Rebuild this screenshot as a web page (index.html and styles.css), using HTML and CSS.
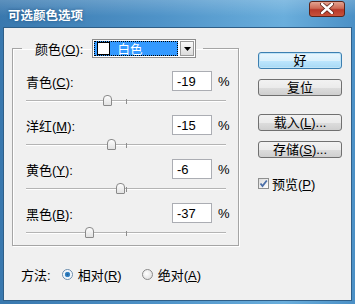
FILE: index.html
```html
<!DOCTYPE html>
<html lang="zh-CN">
<head>
    <meta charset="UTF-8">
    <title>可选颜色选项</title>
    <link rel="stylesheet" href="styles.css">
</head>
<body>
    <div class="window">
        <div class="titlebar">
            <span class="title">可选颜色选项</span>
            <span class="close">
                <svg width="14" height="11" viewBox="0 0 14 11">
                    <path d="M2 1 L12 10 M12 1 L2 10" stroke="#5a1e14" stroke-width="4" stroke-linecap="round"/>
                    <path d="M2 1 L12 10 M12 1 L2 10" stroke="#fff" stroke-width="2.4" stroke-linecap="round"/>
                </svg>
            </span>
        </div>
        <div class="client">
            <div class="main">
                <fieldset class="group">
                    <legend>
                        <span class="label">颜色(<u>O</u>):</span>
                        <span class="select">
                            <span class="choice">
                                <span class="swatch"></span>
                                <span class="choice-text">白色</span>
                            </span>
                            <span class="arrow">
                                <svg width="7" height="4" viewBox="0 0 7 4"><path d="M0 0 H7 L3.5 4 Z" fill="#000"/></svg>
                            </span>
                        </span>
                    </legend>

                    <div class="row">
                        <div class="field">
                            <span class="label">青色(<u>C</u>):</span>
                            <span class="input">-19</span>
                            <span class="pct">%</span>
                        </div>
                        <div class="slider"><span class="track"></span><span class="tick"></span><span class="thumb" style="left: 77px"></span></div>
                    </div>
                    <div class="row">
                        <div class="field">
                            <span class="label">洋红(<u>M</u>):</span>
                            <span class="input">-15</span>
                            <span class="pct">%</span>
                        </div>
                        <div class="slider"><span class="track"></span><span class="tick"></span><span class="thumb" style="left: 81px"></span></div>
                    </div>
                    <div class="row">
                        <div class="field">
                            <span class="label">黄色(<u>Y</u>):</span>
                            <span class="input">-6</span>
                            <span class="pct">%</span>
                        </div>
                        <div class="slider"><span class="track"></span><span class="tick"></span><span class="thumb" style="left: 90px"></span></div>
                    </div>
                    <div class="row">
                        <div class="field">
                            <span class="label">黑色(<u>B</u>):</span>
                            <span class="input">-37</span>
                            <span class="pct">%</span>
                        </div>
                        <div class="slider"><span class="track"></span><span class="tick"></span><span class="thumb" style="left: 59px"></span></div>
                    </div>
                </fieldset>

                <div class="method">
                    <span class="label">方法:</span>
                    <span class="radio checked"></span>
                    <span class="opt">相对(<u>R</u>)</span>
                    <span class="radio"></span>
                    <span class="opt">绝对(<u>A</u>)</span>
                </div>
            </div>

            <div class="side">
                <div class="btn default">好</div>
                <div class="btn">复位</div>
                <div class="btn gap">载入(<u>L</u>)...</div>
                <div class="btn">存储(<u>S</u>)...</div>
                <div class="check-row">
                    <span class="checkbox">
                        <svg width="9" height="9" viewBox="0 0 9 9"><path d="M1.5 4.5 L3.5 7 L7.8 1.5" fill="none" stroke="#4a6ea8" stroke-width="1.8"/></svg>
                    </span>
                    <span class="opt">预览(<u>P</u>)</span>
                </div>
            </div>
        </div>
    </div>
</body>
</html>
```

FILE: styles.css
```css
/* dialog frame */
body {
    margin: 0;
    font-family: "Liberation Sans", "Noto Sans CJK SC", sans-serif;
    font-size: 13px;
    color: #000;
}

u {
    text-decoration: underline;
    text-underline-offset: 1px;
}

.window {
    width: 355px;
    height: 304px;
    box-sizing: border-box;
    display: flex;
    flex-direction: column;
    padding: 0 3px 3px;
    background: linear-gradient(to right, #3978ae, #4f93c8 45%, #6aaedc 80%, #4b90c6);
}

.titlebar {
    height: 27px;
    display: flex;
    align-items: center;
    justify-content: space-between;
    padding: 0 4px 0 8px;
    background: linear-gradient(rgba(255, 255, 255, 0.18), rgba(255, 255, 255, 0) 60%);
    margin: 0 -3px;
}

.title {
    color: #fff;
    font-family: "Noto Sans CJK SC", sans-serif;
    font-weight: bold;
    font-size: 12.5px;
    text-shadow: 0 0 3px rgba(0, 40, 80, 0.5);
    margin-top: 2px;
}

.close {
    width: 34px;
    height: 14px;
    margin: -10px 6px 0 0;
    display: flex;
    align-items: center;
    justify-content: center;
    border: 1px solid #5b241b;
    border-radius: 3px;
    background: linear-gradient(#e3a391, #cf6a55 45%, #b8392a 55%, #c8533c);
}

.client {
    flex: 1;
    display: flex;
    background: #f0f0f0;
    border: 1px solid #2f5f88;
}

/* left column */
.main {
    padding: 11px 0 0 8px;
}

.group {
    width: 227px;
    box-sizing: border-box;
    margin: 0;
    padding: 13px 12px 2px 13px;
    border: 1px solid #a5a5a5;
    box-shadow: inset 1px 1px 0 #fff, 1px 1px 0 #fff;
}

.group legend {
    display: flex;
    align-items: center;
    margin-left: -4px;
    padding: 0 7px 0 13px;
}

.select {
    margin-left: 9px;
    width: 104px;
    height: 19px;
    box-sizing: border-box;
    display: flex;
    align-items: center;
    padding: 1px;
    border: 1px solid #8c8c8c;
    background: #fff;
}

.choice {
    flex: 1;
    height: 15px;
    display: flex;
    align-items: center;
    background: #3399ff;
    outline: 1px dotted #000;
    outline-offset: -1px;
    margin-right: 2px;
}

.swatch {
    width: 13px;
    height: 13px;
    margin-left: 3px;
    background: #fff;
    border: 1px solid #000;
    box-sizing: border-box;
}

.choice-text {
    color: #fff;
    margin-left: 7px;
    font-family: "Noto Sans CJK SC", sans-serif;
    font-size: 12.5px;
}

.arrow {
    width: 14px;
    height: 15px;
    box-sizing: border-box;
    display: flex;
    align-items: center;
    justify-content: center;
    border: 1px solid #9a9a9a;
    background: linear-gradient(#fafafa, #dcdcdc);
}

.row {
    display: flex;
    flex-direction: column;
    margin-bottom: 4px;
}

.row:last-child {
    margin-bottom: 0;
}

.field {
    height: 20px;
    display: flex;
    align-items: center;
}

.field .label {
    flex: 1;
}

.input {
    width: 40px;
    height: 20px;
    box-sizing: border-box;
    padding: 0 4px;
    display: flex;
    align-items: center;
    background: #fff;
    border: 1px solid #abadb3;
}

.pct {
    width: 8px;
    margin-left: 6px;
    white-space: nowrap;
}

.slider {
    position: relative;
    height: 20px;
    width: 200px;
}

.track {
    position: absolute;
    left: 0;
    right: 0;
    top: 9px;
    border-top: 1px solid #b4b4b4;
    border-bottom: 1px solid #fff;
}

.tick {
    position: absolute;
    left: 100px;
    top: 8px;
    width: 1px;
    height: 5px;
    background: #8e8e8e;
}

.thumb {
    position: absolute;
    top: 4px;
    width: 9px;
    height: 11px;
    box-sizing: border-box;
    border: 1px solid #8a8a8a;
    border-radius: 4px 4px 1px 1px;
    background: linear-gradient(#fdfdfd, #e2e2e2);
}

.method {
    display: flex;
    align-items: center;
    height: 18px;
    margin-top: 19px;
    padding-left: 9px;
}

.radio {
    width: 11px;
    height: 11px;
    box-sizing: border-box;
    border-radius: 50%;
    border: 1px solid #8a8a8a;
    background: radial-gradient(circle at 40% 40%, #fff, #d8d8d8);
    margin: 0 5px 0 11px;
}

.radio.checked {
    background: radial-gradient(circle, #1c5d99 0, #3f8fd0 2.5px, #e8f0f8 3px, #fff 4.5px);
    border-color: #6a8cac;
}

.method .opt {
    margin-right: 9px;
}

/* right column */
.side {
    display: flex;
    flex-direction: column;
    margin-left: 19px;
    padding-top: 24px;
}

.btn {
    width: 84px;
    height: 17px;
    box-sizing: border-box;
    display: flex;
    align-items: center;
    justify-content: center;
    border: 1px solid #707070;
    border-radius: 3px;
    background: linear-gradient(#f2f2f2, #ebebeb 50%, #dddddd 51%, #cfcfcf);
    margin-bottom: 10px;
    line-height: 1;
}

.btn.default {
    border-color: #3c7fb1;
    box-shadow: inset 0 0 0 1px #bfe3f6;
    background: linear-gradient(#eaf6fd, #d9f0fc 50%, #bee6fd 51%, #a7d9f5);
}

.btn.gap {
    margin-top: 8px;
}

.check-row {
    display: flex;
    align-items: center;
    margin-top: 6px;
}

.checkbox {
    width: 11px;
    height: 11px;
    box-sizing: border-box;
    display: flex;
    align-items: center;
    justify-content: center;
    border: 1px solid #8e8f8f;
    background: linear-gradient(135deg, #dcdcdc, #fff);
    margin-right: 3px;
}
```
